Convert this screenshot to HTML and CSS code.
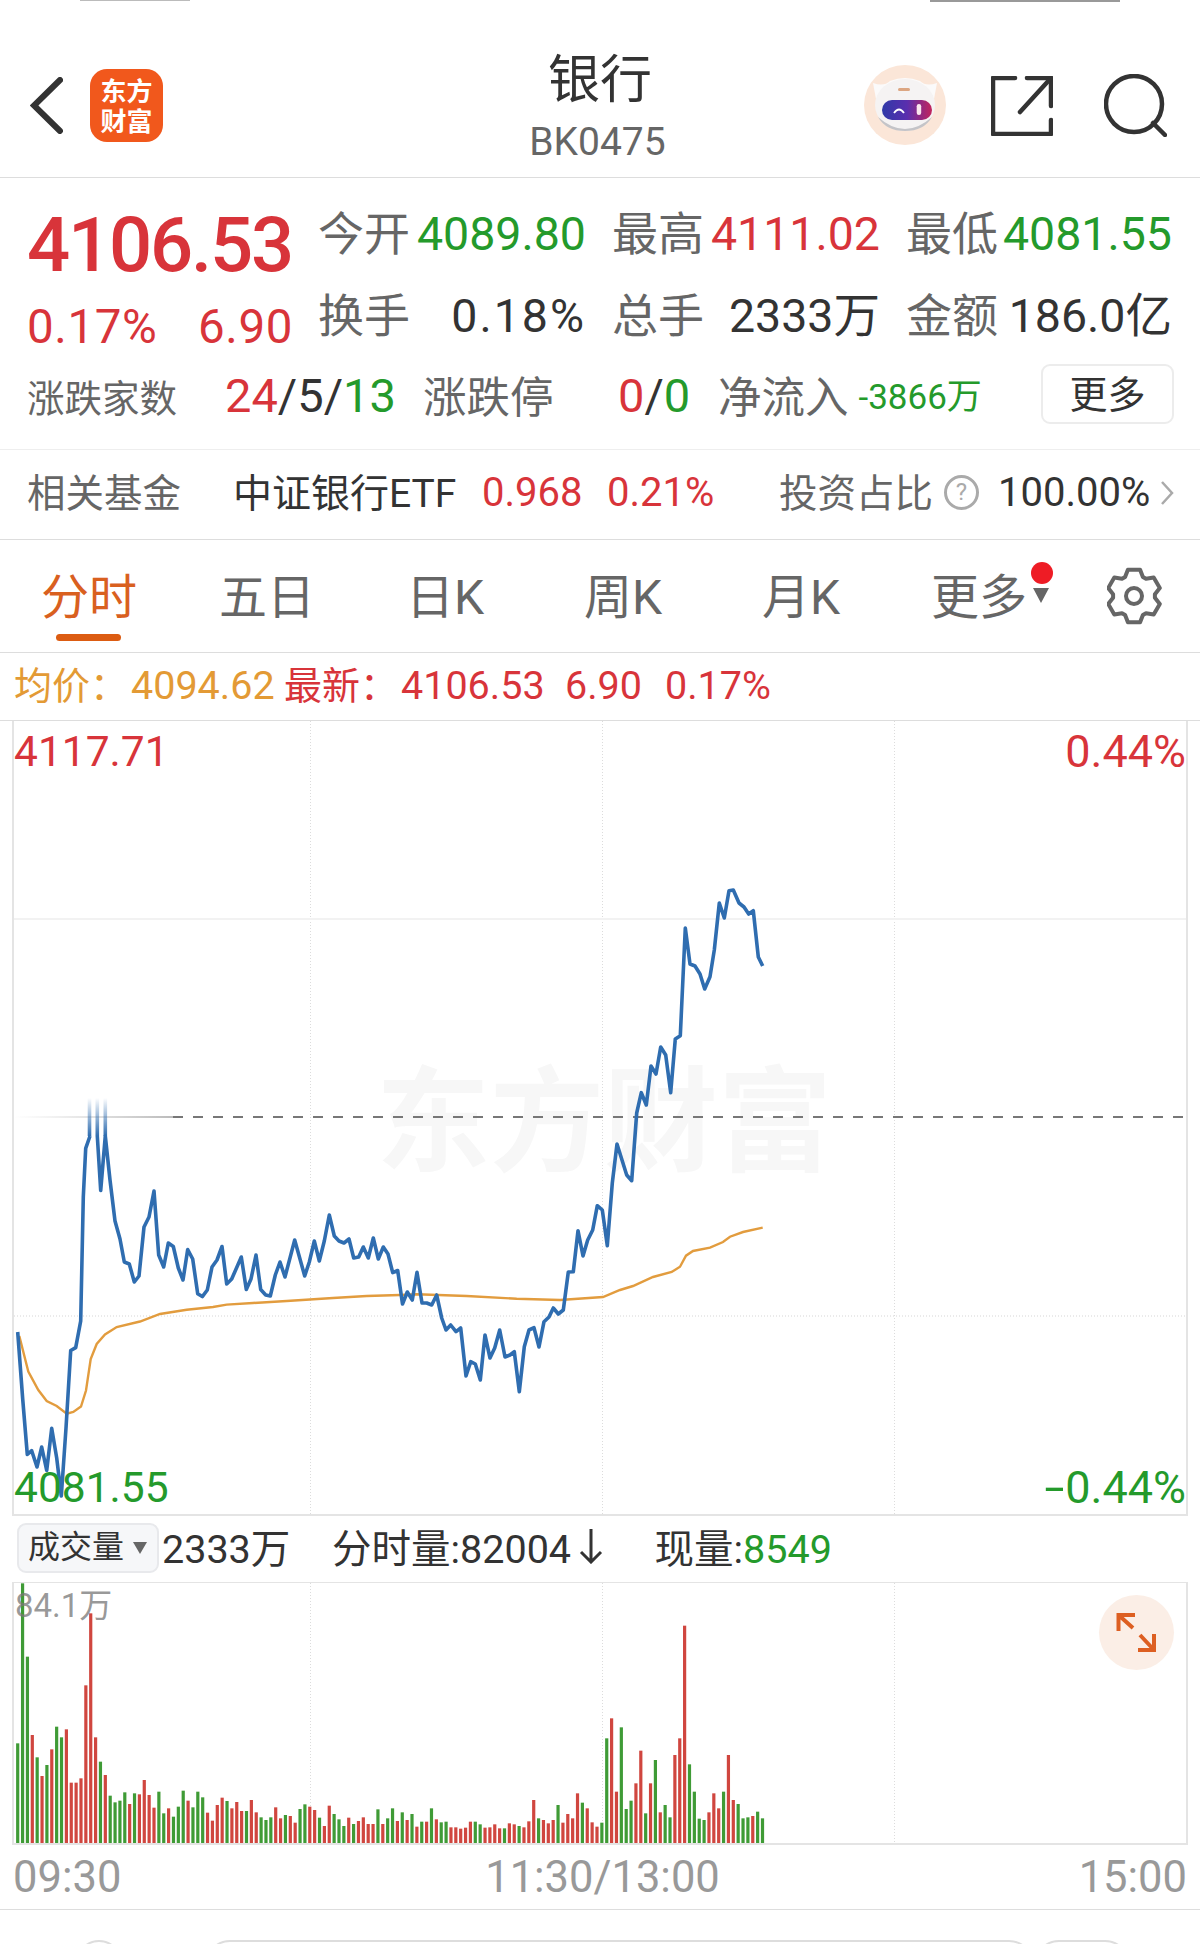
FILE: index.html
```html
<!DOCTYPE html>
<html lang="zh-CN">
<head>
<meta charset="UTF-8" />
<meta name="viewport" content="width=device-width, initial-scale=1" />
<title>银行 BK0475</title>
<link rel="stylesheet" href="styles.css">
</head>
<body>

<div class="status-bar">
  <span class="status-clock"></span>
  <span class="status-icons"></span>
</div>

<header class="nav">
  <svg class="back-icon" width="33" height="57" viewBox="0 0 33 57"><path d="M30 3 L4 28.5 L30 54" /></svg>
  <div class="logo"><span>东方</span><span>财富</span></div>
  <div class="nav-title">
    <h1>银行</h1>
    <p>BK0475</p>
  </div>
  <svg class="robot" width="82" height="82" viewBox="0 0 82 82">
    <defs>
      <linearGradient id="visor" x1="0" x2="1" y1="0" y2="0">
        <stop offset="0" stop-color="#2f3aa8" />
        <stop offset="0.5" stop-color="#5a2eae" />
        <stop offset="1" stop-color="#c2255c" />
      </linearGradient>
    </defs>
    <ellipse cx="41" cy="40" rx="41" ry="40" fill="#fbe6d8" />
    <path d="M9 18 Q20 22 26 16 Q41 10 56 16 Q62 22 73 18 L70 34 L12 34 Z" fill="#fbfafa" />
    <ellipse cx="41" cy="40" rx="30" ry="26" fill="#f5f3f3" />
    <path d="M14 52 Q41 76 68 52 Q60 66 41 66 Q22 66 14 52 Z" fill="#c4c4c8" />
    <rect x="34" y="23" width="12" height="3" rx="1.5" fill="#dca682" />
    <rect x="18" y="35" width="50" height="20" rx="10" fill="url(#visor)" />
    <path d="M30 48 Q35 41 40 48" fill="none" stroke="#fff" stroke-width="1.8" />
    <rect x="52.7" y="39" width="4.5" height="11" rx="2.2" fill="#fbe6ee" />
  </svg>
  <svg class="share-icon" width="62" height="60" viewBox="0 0 62 60">
    <path d="M24 2 H2 V58 H60 V44" />
    <path d="M60 30 V2 H36" />
    <path d="M60 2 L29 36" />
  </svg>
  <svg class="search-icon" width="63" height="63" viewBox="0 0 63 63">
    <circle cx="30" cy="30" r="28" />
    <path d="M49 49 L61 61" />
  </svg>
</header>

<section class="quote">
  <div class="quote-top">
    <div class="price-block">
      <div class="price up">4106.53</div>
      <div class="price-change up"><span>0.17%</span><span>6.90</span></div>
    </div>
    <div class="stats">
      <div class="stat"><span class="label">今开</span><span class="down">4089.80</span></div>
      <div class="stat"><span class="label">最高</span><span class="up">4111.02</span></div>
      <div class="stat"><span class="label">最低</span><span class="down">4081.55</span></div>
      <div class="stat"><span class="label">换手</span><span class="turnover">0.18%</span></div>
      <div class="stat"><span class="label">总手</span><span>2333万</span></div>
      <div class="stat"><span class="label">金额</span><span>186.0亿</span></div>
    </div>
  </div>
  <div class="quote-bottom">
    <span class="label small">涨跌家数</span>
    <span class="tally"><span class="up">24</span>/5/<span class="down">13</span></span>
    <span class="label mid">涨跌停</span>
    <span class="tally"><span class="up">0</span>/<span class="down">0</span></span>
    <span class="label mid">净流入</span>
    <span class="net-flow down">-3866万</span>
    <button class="more-btn">更多</button>
  </div>
</section>

<section class="fund-row">
  <span class="label cjk">相关基金</span>
  <span class="fund-name cjk">中证银行ETF</span>
  <span class="up">0.968</span>
  <span class="up">0.21%</span>
  <span class="label cjk">投资占比</span>
  <span class="help-icon">?</span>
  <span class="fund-share">100.00%</span>
  <svg class="fund-arrow" width="14" height="26" viewBox="0 0 14 26"><path d="M2 2 L12 13 L2 24" /></svg>
</section>

<nav class="tabs">
  <a class="tab active">分时</a>
  <a class="tab">五日</a>
  <a class="tab">日K</a>
  <a class="tab">周K</a>
  <a class="tab">月K</a>
  <a class="tab tab-more">更多</a>
  <svg class="gear" width="56" height="58" viewBox="0 0 56 58">
    <path d="M18.1 10 L20.9 2.7 H33.1 L35.9 10 L39 11.8 L46.7 10.6 L52.8 21.1 L47.9 27.2 V30.8 L52.8 36.9 L46.7 47.4 L39 46.2 L35.9 48 L33.1 55.3 H20.9 L18.1 48 L15 46.2 L7.3 47.4 L1.2 36.9 L6.1 30.8 V27.2 L1.2 21.1 L7.3 10.6 L15 11.8 Z" />
    <circle cx="27" cy="29" r="8" />
  </svg>
</nav>

<div class="avg-row">
  <span class="avg cjk">均价：</span>
  <span class="avg">4094.62</span>
  <span class="up cjk">最新：</span>
  <span class="up">4106.53</span>
  <span class="up">6.90</span>
  <span class="up">0.17%</span>
</div>

<div class="price-chart">
  <svg id="price-svg" class="chart-svg" width="1172" height="793" viewBox="14 721 1172 793">
    <defs>
      <linearGradient id="spike" gradientUnits="userSpaceOnUse" x1="0" x2="0" y1="1136" y2="1098">
        <stop offset="0" stop-color="#2f6db0" />
        <stop offset="1" stop-color="#2f6db0" stop-opacity="0" />
      </linearGradient>
      <linearGradient id="dash-fade" x1="0" x2="1" y1="0" y2="0">
        <stop offset="0" stop-color="#ccc" stop-opacity="0" />
        <stop offset="1" stop-color="#bbb" />
      </linearGradient>
    </defs>
  </svg>
  <div class="watermark">东方财富</div>
  <span class="axis top-left up">4117.71</span>
  <span class="axis top-right up">0.44%</span>
  <span class="axis bottom-left down">4081.55</span>
  <span class="axis bottom-right down"><span class="minus">-</span>0.44%</span>
</div>

<div class="vol-row">
  <div class="vol-select">成交量<i class="caret"></i></div>
  <span class="vol-total">2333万</span>
  <span class="vol-minute">分时量:82004<svg class="down-arrow" width="24" height="36" viewBox="0 0 24 36"><path d="M12 1 V34 M2 24 L12 34 L22 24" /></svg></span>
  <span class="vol-now">现量:<span class="down">8549</span></span>
</div>

<div class="vol-chart">
  <svg id="vol-svg" class="chart-svg" width="1172" height="260" viewBox="14 1583 1172 260"></svg>
  <span class="vol-max">84.1万</span>
  <div class="expand-btn">
    <svg width="75" height="75" viewBox="0 0 75 75">
      <path d="M19.5 36 V20 H36 M19.5 20 L34 33" />
      <path d="M55 39 V55 H39 M55 55 L41 40" />
    </svg>
  </div>
</div>

<div class="time-row">
  <span>09:30</span>
  <span class="time-mid">11:30/13:00</span>
  <span>15:00</span>
</div>

<div class="footer">
  <span class="foot-circle"></span>
  <span class="foot-input"></span>
  <span class="foot-tail"></span>
</div>

<script src="chart.js"></script>
</body>
</html>
```

FILE: styles.css
```css
* { box-sizing: border-box; }
body {
  margin: 0; width: 1200px; height: 1944px; overflow: hidden; background: #fff; color: #333;
  font-family: Roboto, "Noto Sans CJK SC", sans-serif; font-size: 40px;
}
.up { color: #d8343a; }
.down { color: #249a2b; }
.label { color: #666; }

/* status bar, only its lower edge is in the shot */
.status-bar { height: 2px; position: relative; overflow: hidden; }
.status-clock { position: absolute; left: 80px; top: 0; width: 110px; height: 1px; background: #bbb; }
.status-icons { position: absolute; left: 930px; top: 0; width: 190px; height: 2px; background: #999; }

/* nav */
.nav { height: 176px; border-bottom: 1px solid #ddd; display: flex; align-items: flex-start; position: relative; }
.back-icon { margin-left: 30px; margin-top: 75px; }
.back-icon path { fill: none; stroke: #333; stroke-width: 6; stroke-linecap: round; stroke-linejoin: miter; }
.logo {
  width: 73px; height: 73px; margin-left: 27px; margin-top: 67px; background: #f1581c; border-radius: 17px;
  color: #fff; display: flex; flex-direction: column; align-items: center; justify-content: center;
  font-size: 26px; line-height: 30px; font-weight: 700; font-family: "Noto Sans CJK SC", sans-serif;
}
.logo span { position: relative; top: -1px; }
.nav-title { position: absolute; left: 0; right: 0; top: 46px; text-align: center; }
.nav-title h1 { margin: 0; font-size: 52px; line-height: 66px; font-weight: 400; color: #333; }
.nav-title p { margin: 5px 5px 0 0; font-size: 39px; line-height: 46px; color: #666; }
.robot { position: absolute; left: 864px; top: 63px; }
.share-icon { position: absolute; left: 991px; top: 74px; }
.share-icon path { fill: none; stroke: #333; stroke-width: 4.5; stroke-linecap: round; stroke-linejoin: round; }
.search-icon { position: absolute; left: 1104px; top: 72px; }
.search-icon circle, .search-icon path { fill: none; stroke: #333; stroke-width: 4.5; stroke-linecap: round; }

/* quote block */
.quote { height: 271px; padding-top: 15px; }
.quote-top { display: flex; height: 164px; padding-left: 27px; }
.price-block { width: 294px; padding-top: 11px; }
.price { font-size: 76px; line-height: 82px; font-weight: 500; letter-spacing: -2.2px; }
.price-change { display: flex; justify-content: space-between; width: 266px; margin-top: 11px; font-size: 47.5px; line-height: 60px; letter-spacing: 0.6px; }
.stats { display: grid; grid-template-columns: repeat(3, 294px); grid-auto-rows: 82px; align-items: center; }
.stat { width: 268px; display: flex; justify-content: space-between; align-items: center; font-size: 46.5px; line-height: 60px; }
.stat:nth-child(3n) { width: 266px; }
.stat .label { font-size: 46px; }
.turnover { letter-spacing: 2px; }

.quote-bottom {
  display: grid; grid-template-columns: 198px 198px 195px 100px 140.5px 182.5px 133px;
  padding-left: 27px; height: 76px; align-items: center; font-size: 47px;
}
.label.small { font-size: 37.5px; }
.label.mid { font-size: 43.5px; margin-bottom: 2px; }
.net-flow { font-size: 35px; margin-bottom: 4px; }
.more-btn {
  height: 60px; background: #fff; border: 2px solid #ececec; border-radius: 9px;
  font: inherit; font-size: 38px; line-height: 50px; color: #333; padding: 2px 0 0; margin-top: -3px;
}

/* related fund */
.fund-row {
  height: 91px; border-top: 1px solid #eee; border-bottom: 1px solid #ddd; padding-left: 27px; padding-bottom: 4px;
  display: grid; grid-template-columns: 206px 249px 125px 172px 165px 54px 162px 14px; align-items: center;
}
.fund-row .cjk { margin-bottom: 5px; font-size: 38.5px; }
.fund-row .fund-name { color: #333; font-size: 39px; }
.fund-share { color: #333; }
.help-icon {
  width: 35px; height: 35px; border: 3px solid #aaa; border-radius: 50%; color: #aaa;
  font-size: 24px; line-height: 29px; text-align: center;
}
.fund-arrow path { fill: none; stroke: #aaa; stroke-width: 2.5; }

/* tabs */
.tabs { height: 113px; border-bottom: 1px solid #ddd; display: grid; grid-template-columns: repeat(6, 178px) 1fr; align-items: center; position: relative; }
.tab { font-size: 48px; line-height: 60px; color: #666; text-align: center; position: relative; margin-top: 3px; }
.tab.active { color: #d9601f; }
.tab.active::after {
  content: ""; position: absolute; left: 56px; top: 66px; width: 65px; height: 7px; border-radius: 4px; background: #dc5c12;
}
.tab-more::before {
  content: ""; position: absolute; left: 141px; top: -6px; width: 22px; height: 22px; border-radius: 50%; background: #ee1c25;
}
.tab-more::after {
  content: ""; position: absolute; left: 143px; top: 20px; border: 8px solid transparent; border-top: 15px solid #666; border-bottom: 0;
}
.gear { margin-left: 39px; }
.gear path, .gear circle { fill: none; stroke: #666; stroke-width: 4; stroke-linejoin: round; }

/* average price row */
.avg-row {
  height: 68px; border-bottom: 1px solid #ddd; padding-left: 14px; padding-bottom: 3px; font-size: 39.5px;
  display: grid; grid-template-columns: 117px 153px 117px 164px 100px 1fr; align-items: center;
}
.avg-row .cjk { font-size: 38px; margin-bottom: 5px; }
.avg { color: #e39a35; }

/* charts */
.price-chart, .vol-chart { width: 1176px; margin-left: 12px; border: 2px solid #e4e4e4; border-top: 0; position: relative; }
.chart-svg { display: block; }
.watermark {
  position: absolute; left: 362px; top: 327px; font-size: 114px; line-height: 130px; font-weight: 700; color: #f7f7f7; z-index: -1;
  font-family: "Noto Sans CJK SC", sans-serif;
}
.axis { position: absolute; font-size: 42.5px; line-height: 50px; }
.top-left { left: 0; top: 6px; }
.top-right { right: 0; top: 6px; font-size: 45px; }
.bottom-left { left: 0; bottom: 1px; }
.bottom-right { right: 0; bottom: 1px; font-size: 45px; }
.minus { display: inline-block; transform: scaleX(1.6); transform-origin: right; margin-right: 1px; }

.vol-row { height: 66px; display: flex; align-items: center; font-size: 39.5px; padding-left: 17px; padding-bottom: 3px; }
.vol-row > span { margin-bottom: 4px; }
.vol-select {
  width: 142px; height: 50px; background: #f6f7f9; border: 2px solid #e8e9ec; border-radius: 9px;
  font-size: 32px; line-height: 44px; padding-left: 9px; color: #333; position: relative;
}
.caret { position: absolute; left: 114px; top: 17px; border: 7.5px solid transparent; border-top: 12px solid #666; border-bottom: 0; }
.vol-total { margin-left: 3px; width: 170px; }
.vol-minute { width: 322.5px; display: flex; align-items: center; }
.down-arrow { margin-left: 8px; }
.down-arrow path { fill: none; stroke: #333; stroke-width: 3; }

.vol-chart { border-top: 1px solid #e4e4e4; }
.vol-max { position: absolute; left: 1px; top: 3px; font-size: 33px; line-height: 40px; color: rgba(120,120,120,0.75); }
.expand-btn { position: absolute; right: 12px; top: 12px; width: 75px; height: 75px; border-radius: 50%; background: #fbeee6; }
.expand-btn svg { display: block; }
.expand-btn path { fill: none; stroke: #dd5f22; stroke-width: 4; }

.time-row {
  height: 65px; border-bottom: 1px solid #ddd; padding: 0 13px; display: flex; justify-content: space-between;
  align-items: center; font-size: 43.5px; color: #999;
}
.time-mid { margin-left: 5px; }

/* tab bar below, only its top edge shows */
.footer { height: 34px; padding-top: 30px; display: flex; overflow: hidden; }
.foot-circle { width: 46px; height: 46px; margin-left: 76px; border: 2px solid #ddd; border-radius: 50%; }
.foot-input { width: 829px; height: 50px; margin-left: 83px; border: 2px solid #ddd; border-radius: 25px; }
.foot-tail { width: 96px; height: 50px; border: 2px solid #ddd; border-radius: 25px; }
```

FILE: chart.js
```js
const NS = 'http://www.w3.org/2000/svg';

function add(svg, tag, attrs) {
  const el = document.createElementNS(NS, tag);
  Object.keys(attrs).forEach(k => el.setAttribute(k, attrs[k]));
  svg.appendChild(el);
  return el;
}

// page coordinates, x y pairs
const lineLeft = '17.7,1332 22.7,1399 27.3,1454.5 31.7,1450.7 37,1467 41.7,1447 46.7,1470.5 51.7,1428.4 56.7,1458 61.3,1496 66,1428 70.7,1350.5 75.7,1347.6 80.7,1321 83.3,1197 85.7,1148.4 90,1136';
const lineRight = '97.3,1136 100.7,1190.5 105.3,1136 110,1180 115,1221 120,1239 124.3,1262 129.3,1264 134.3,1282 139,1276 144,1227 149,1217 154,1191 158.7,1255 163.7,1267 168.3,1243 173.3,1246.5 178.3,1268 183,1280 187.7,1249.5 192.7,1259 197.7,1293.7 202.3,1296.6 207.3,1290 212,1267 217,1260 222,1246.5 226.7,1284 231.7,1279 241.3,1257 246.3,1289.5 251,1279 256,1255 260.7,1289.5 265.7,1295 270.3,1296 275.3,1275 280,1262 285,1277 294.7,1240 304.7,1276 309.3,1262 314.3,1241 319.3,1261 324.3,1241 329.3,1215 334.3,1236 339,1241 344,1243 349,1239 353.7,1258 358.7,1257 363.3,1247 368.3,1258 373.3,1238 378.3,1259 383.3,1247 388,1254 392.7,1272.6 397.7,1270.5 402.5,1304 407.3,1292 412.3,1300 417,1272.3 422,1303 426.7,1303 431.7,1305 436.7,1295 441.7,1318 446,1330 450.7,1325 456,1331.7 460.7,1328 466,1376 470.7,1361.7 475.3,1364 480.3,1380 485,1335 490,1358 494.7,1348 499.7,1330 505,1357 510,1355 514.3,1351.7 519.3,1391.7 524.3,1346.7 529,1330 534,1327.7 539,1347 544,1321.7 549,1317 553.3,1308 558.3,1314 563.3,1310 568.3,1272 573.3,1271.7 578,1230.7 583,1256 587.7,1240 592.7,1230 597.3,1205.7 602.3,1210 607.3,1245.7 612.3,1183 617,1144 622,1160 626.7,1175 631.7,1180.7 636.7,1113 641.3,1092.7 646.3,1105 651,1066 656,1074 660.7,1047 665.7,1055 670.7,1092.7 675.3,1039 680.3,1035.7 685.3,928 690,964 695,966 700,974 704.7,989 710,976.7 714.3,950 719.3,903 724.3,918 729,890.7 733.3,890 739,903 744,907 748.7,914 753.3,910.7 758.3,957 762.7,966';
const avgLine = '19.3,1336 28.3,1371.6 38.3,1390 46.7,1401 56.7,1406 66.7,1413.7 73.3,1412 81,1406.5 86,1390.5 90.7,1359 96.7,1344 105,1334.5 116.7,1327 140,1321.5 160,1314 186.7,1309.7 213,1307 226.7,1304.6 253,1303 286.7,1301 333,1298 366.7,1296 400,1295 416.7,1294.3 466.7,1296 516.7,1298.7 560,1300 603,1297 620,1290 633,1286 653,1277 671.7,1272 680,1266.7 686,1255.7 693,1251 710,1247.7 723,1242 730,1236.7 743,1232 762.7,1227.7';

// bar tops as read off the 3x crops: y = 1500 + top / 3, g green, r red
const bars = 'g730 g250 g470 r705 g772 r828 g795 r748 g680 g712 r688 r848 r848 r835 r556 r340 r712 g785 r825 g887 g907 g902 g877 r912 g880 r883 r840 r885 r923 g875 g940 r925 g950 g920 g872 r902 g922 g875 g892 r938 r962 r915 r893 g903 r925 r906 r933 g933 r900 r937 g952 g960 g952 r922 r955 g945 r948 r968 g927 g913 r920 r930 g953 r978 r917 g942 g958 g978 r953 g972 r963 r952 r972 r972 g928 r972 g955 g925 r963 g937 r960 g942 r980 ' +
  'g965 r965 g925 r958 g967 g965 r982 r982 r986 r983 r965 g965 g973 r983 r982 r973 r985 g985 r970 r973 g978 r982 r964 r900 g955 r960 r970 r960 g915 r968 r942 r955 r880 g908 r925 r967 r980 g968 g715 r655 r875 g682 g927 g902 r850 r752 g940 r850 g780 r937 g915 g952 r765 r715 r377 g793 g875 g956 g960 r937 r880 r925 g875 r765 r900 g912 g955 g952 r948 g935 g955';

function gridLines(svg, top, bottom) {
  [310.5, 602.5, 894.5].forEach(x => {
    add(svg, 'line', { x1: x, x2: x, y1: top, y2: bottom, stroke: '#dcdcdc', 'stroke-width': 1, 'stroke-dasharray': '1 2' });
  });
}

const priceSvg = document.getElementById('price-svg');
gridLines(priceSvg, 721, 1514);
add(priceSvg, 'line', { x1: 14, x2: 1186, y1: 919, y2: 919, stroke: '#f2f2f2', 'stroke-width': 2 });
add(priceSvg, 'line', { x1: 14, x2: 1186, y1: 1316, y2: 1316, stroke: '#e4e4e4', 'stroke-width': 1.5, 'stroke-dasharray': '1 2' });
add(priceSvg, 'rect', { x: 14, y: 1116, width: 159, height: 2, fill: 'url(#dash-fade)' });
add(priceSvg, 'line', { x1: 173, x2: 1186, y1: 1117, y2: 1117, stroke: '#777', 'stroke-width': 2, 'stroke-dasharray': '10 10' });

add(priceSvg, 'polyline', { points: avgLine, fill: 'none', stroke: '#e29c3e', 'stroke-width': 2.4 });
[lineLeft, lineRight].forEach(points => {
  add(priceSvg, 'polyline', { points, fill: 'none', stroke: '#2f6db0', 'stroke-width': 3.6, 'stroke-linejoin': 'round' });
});
[89.5, 97.3, 105.3].forEach(x => {
  add(priceSvg, 'rect', { x: x - 1.8, y: 1098, width: 3.6, height: 38, fill: 'url(#spike)' });
});

const volSvg = document.getElementById('vol-svg');
gridLines(volSvg, 1583, 1843);
bars.split(' ').forEach((bar, i) => {
  const y = 1500 + Number(bar.slice(1)) / 3;
  add(volSvg, 'rect', {
    x: 16.1 + i * 4.868, y, width: 3.2, height: 1843.5 - y,
    fill: bar[0] === 'g' ? '#3f9b36' : '#d0463f'
  });
});
```
